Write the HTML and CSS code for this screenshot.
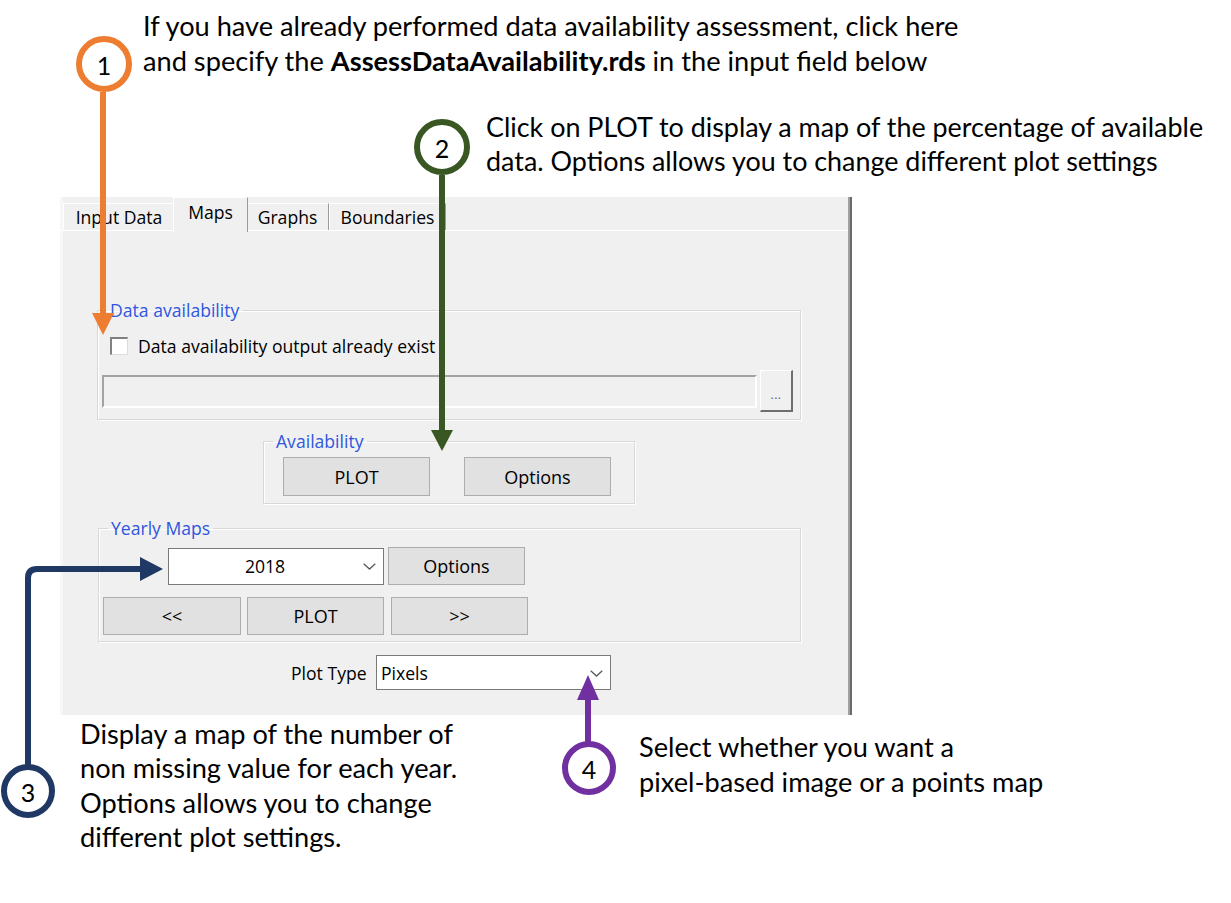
FILE: index.html
```html
<!DOCTYPE html>
<html>
<head>
<meta charset="utf-8">
<link rel="stylesheet" href="styles.css">
</head>
<body>
<div class="canvas">
  <div class="panel">
    <div class="tabs">
      <div class="tab tab-input">Input Data</div>
      <div class="tab tab-maps active">Maps</div>
      <div class="tab tab-graphs">Graphs</div>
      <div class="tab tab-bounds">Boundaries</div>
    </div>
    <div class="page">
      <fieldset class="group g-data">
        <legend>Data availability</legend>
        <div class="check"><span class="box"></span><span>Data availability output already exist</span></div>
        <div class="file-row">
          <div class="field"></div>
          <div class="browse">...</div>
        </div>
      </fieldset>
      <fieldset class="group g-avail">
        <legend>Availability</legend>
        <div class="row avail-row">
          <div class="btn btn-wide">PLOT</div>
          <div class="btn btn-wide">Options</div>
        </div>
      </fieldset>
      <fieldset class="group g-yearly">
        <legend>Yearly Maps</legend>
        <div class="row year-row">
          <div class="combo combo-year"><span class="combo-text">2018</span><svg class="chev" width="13" height="7" viewBox="0 0 13 7"><path d="M0.7 0.7 L6.5 6 L12.3 0.7" fill="none" stroke="#5a5a5a" stroke-width="1.3"/></svg></div>
          <div class="btn btn-opt">Options</div>
        </div>
        <div class="row nav-row">
          <div class="btn btn-nav">&lt;&lt;</div>
          <div class="btn btn-nav btn-mid">PLOT</div>
          <div class="btn btn-nav">&gt;&gt;</div>
        </div>
      </fieldset>
      <div class="plot-type">
        <span class="pt-label">Plot Type</span>
        <div class="combo combo-type"><span class="combo-text">Pixels</span><svg class="chev" width="13" height="7" viewBox="0 0 13 7"><path d="M0.7 0.7 L6.5 6 L12.3 0.7" fill="none" stroke="#5a5a5a" stroke-width="1.3"/></svg></div>
      </div>
    </div>
  </div>

  <svg class="marks" width="1231" height="903" viewBox="0 0 1231 903">
    <line x1="103" y1="92" x2="103" y2="316" stroke="#ed7d31" stroke-width="6"/>
    <polygon points="92,313 114,313 103,335" fill="#ed7d31"/>
    <circle cx="104" cy="64" r="25" fill="#fff" stroke="#ed7d31" stroke-width="6"/>
    <text x="104" y="65" class="num">1</text>

    <line x1="442" y1="175" x2="442" y2="432" stroke="#385723" stroke-width="6"/>
    <polygon points="431,430 453,430 442,451" fill="#385723"/>
    <circle cx="442" cy="147" r="25" fill="#fff" stroke="#385723" stroke-width="6"/>
    <text x="442" y="148" class="num">2</text>

    <path d="M28 765 V578 Q28 569 37 569 H142" fill="none" stroke="#203864" stroke-width="6"/>
    <polygon points="140,557 140,581 163,569" fill="#203864"/>
    <circle cx="28" cy="791" r="24" fill="#fff" stroke="#203864" stroke-width="6"/>
    <text x="28" y="792" class="num">3</text>

    <line x1="588" y1="742" x2="588" y2="698" stroke="#7030a0" stroke-width="6"/>
    <polygon points="577,700 599,700 588,675" fill="#7030a0"/>
    <circle cx="589" cy="768" r="24" fill="#fff" stroke="#7030a0" stroke-width="6"/>
    <text x="589" y="769" class="num">4</text>
  </svg>

  <p class="note n1">If you have already performed data availability assessment, click here<br>and specify the <b>AssessDataAvailability.rds</b> in the input field below</p>
  <p class="note n2">Click on PLOT to display a map of the percentage of available<br>data. Options allows you to change different plot settings</p>
  <p class="note n3">Display a map of the number of<br>non missing value for each year.<br>Options allows you to change<br>different plot settings.</p>
  <p class="note n4">Select whether you want a<br>pixel-based image or a points map</p>
</div>
</body>
</html>
```
FILE: styles.css
```css
* { box-sizing: border-box; }
body {
  margin: 0;
  background: #fff;
  font-family: "Open Sans", "Noto Sans", sans-serif;
}
.canvas {
  position: relative;
  width: 1231px;
  height: 903px;
  overflow: hidden;
  padding: 197px 0 0 60px;
}

/* ---------- dialog panel ---------- */
.panel {
  width: 790px;
  height: 518px;
  background: #f0f0f0;
  border-right: 2px solid #a0a0a0;
  box-shadow: inset 3px 0 0 #f7f7f7, 2px 0 0 #6a6a6a;
  display: flex;
  flex-direction: column;
  font-size: 17.6px;
  color: #000;
}
.tabs {
  display: flex;
  align-items: flex-end;
  height: 33px;
  padding-left: 3px;
  flex: none;
}
.tab {
  height: 27px;
  display: flex;
  align-items: center;
  justify-content: center;
  background: #f0f0f0;
  border-top: 1px solid #fff;
  border-left: 1px solid #fff;
  border-right: 1px solid #9a9a9a;
  white-space: nowrap;
  flex: none;
}
.tab-input { width: 112px; }
.tab-maps { width: 71px; }
.tab-graphs { width: 83px; }
.tab-bounds { width: 117px; }
.tab.active {
  height: 35px;
  margin-bottom: -2px;
  margin-left: -2px;
  margin-right: -2px;
  width: 75px;
  padding-bottom: 6px;
  position: relative;
  z-index: 1;
}
.page {
  flex: 1;
  border-top: 1px solid #fff;
  display: flex;
  flex-direction: column;
  align-items: flex-start;
}

/* ---------- group boxes ---------- */
.group {
  margin: 0;
  padding: 0;
  min-width: 0;
  border: 1px solid #d8d8d8;
  box-shadow: inset 1px 1px 0 #fff, 1px 1px 0 #fff;
}
.group legend {
  font-size: 17.6px;
  line-height: 20px;
  height: 20px;
  padding: 0 3px;
  color: #2f56e0;
}
.g-data {
  margin: 69px 0 0 37px;
  width: 704px;
  padding-bottom: 7px;
}
.g-data legend { margin-left: 9px; }
.check {
  display: flex;
  align-items: center;
  gap: 10px;
  height: 20px;
  margin: 16px 0 0 12px;
  white-space: nowrap;
}
.box {
  width: 18px;
  height: 18px;
  background: #fff;
  border-top: 2px solid #808080;
  border-left: 2px solid #808080;
  border-right: 1px solid #dcdcdc;
  border-bottom: 1px solid #dcdcdc;
  flex: none;
}
.file-row {
  display: flex;
  align-items: center;
  gap: 3px;
  margin: 14px 0 0 4px;
}
.field {
  width: 655px;
  height: 33px;
  background: #f0f0f0;
  border-top: 2px solid #a3a3a3;
  border-left: 2px solid #a3a3a3;
  border-bottom: 2px solid #fff;
  border-right: 2px solid #fff;
}
.browse {
  width: 33px;
  height: 42px;
  background: #f0f0f0;
  border-top: 1px solid #fff;
  border-left: 1px solid #fff;
  border-right: 2px solid #6e6e6e;
  border-bottom: 2px solid #6e6e6e;
  display: flex;
  align-items: flex-end;
  justify-content: center;
  padding-bottom: 9px;
  font-size: 12px;
  line-height: 12px;
  letter-spacing: 0.5px;
  color: #4a5a8a;
}

.g-avail {
  margin: 11px 0 0 203px;
  width: 372px;
  padding-bottom: 7px;
}
.g-avail legend { margin-left: 9px; }
.row { display: flex; }
.avail-row {
  gap: 34px;
  margin: 6px 0 0 19px;
}
.btn {
  background: #e1e1e1;
  border: 1px solid #adadad;
  display: flex;
  align-items: center;
  justify-content: center;
  white-space: nowrap;
  flex: none;
  font-size: 18px;
}
.btn-wide { width: 147px; height: 39px; }

.g-yearly {
  margin: 14px 0 0 38px;
  width: 703px;
  padding-bottom: 6px;
}
.g-yearly legend { margin-left: 9px; }
.year-row {
  align-items: center;
  gap: 4px;
  margin: 9px 0 0 69px;
}
.combo {
  background: #fff;
  border: 1px solid #7a7a7a;
  display: flex;
  align-items: center;
  position: relative;
  flex: none;
}
.combo-year {
  width: 216px;
  height: 37px;
  justify-content: center;
  padding-right: 22px;
}
.combo .chev {
  position: absolute;
  right: 7px;
  top: 50%;
  margin-top: -3px;
}
.btn-opt { width: 137px; height: 38px; }
.nav-row {
  gap: 6px;
  margin: 12px 0 0 4px;
}
.btn-nav { width: 137px; height: 38px; }
.btn-nav:first-child { width: 138px; }
.btn-mid { margin-right: 1px; }

.plot-type {
  display: flex;
  align-items: center;
  gap: 8px;
  margin: 13px 0 0 231px;
}
.pt-label { width: 77px; white-space: nowrap; }
.combo-type {
  width: 235px;
  height: 35px;
  padding-left: 4px;
}

/* ---------- annotations ---------- */
.marks {
  position: absolute;
  left: 0;
  top: 0;
  pointer-events: none;
}
.num {
  font-family: Lato, "Open Sans", sans-serif;
  font-size: 25px;
  fill: #000;
  text-anchor: middle;
  dominant-baseline: central;
}
.note {
  position: absolute;
  margin: 0;
  font-family: Lato, "Open Sans", sans-serif;
  font-size: 27.2px;
  line-height: 34.5px;
  color: #000;
  white-space: nowrap;
}
.note b { font-weight: 700; }
.n1 { left: 143px; top: 9px; }
.n2 { left: 486px; top: 110px; line-height: 34px; font-size: 26.9px; }
.n3 { left: 80px; top: 717px; line-height: 34.4px; }
.n4 { left: 639px; top: 729px; line-height: 35px; }
```
